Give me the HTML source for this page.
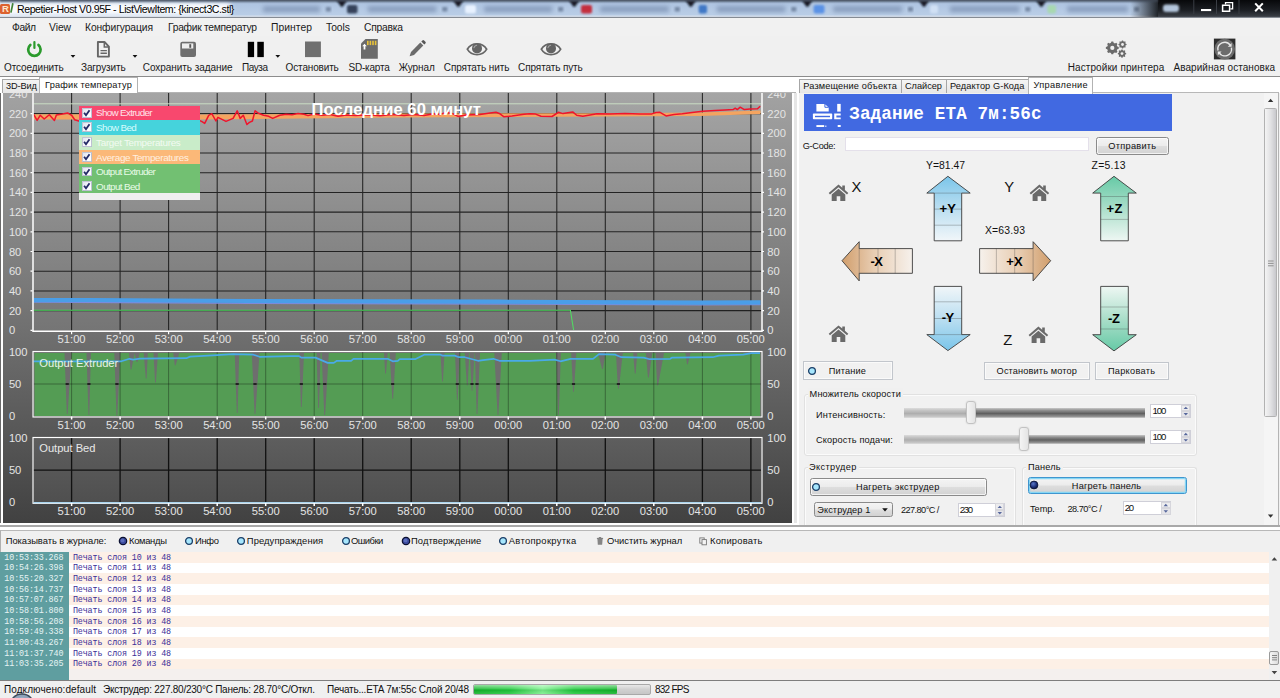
<!DOCTYPE html><html lang="ru"><head><meta charset="utf-8"><title>Repetier-Host V0.95F - ListViewItem: {kinect3C.stl}</title><style>
html,body{margin:0;padding:0;}
body{width:1280px;height:698px;overflow:hidden;background:#f0f0f0;font-family:"Liberation Sans",sans-serif;position:relative;}
.t{position:absolute;white-space:pre;display:block;}
.b{position:absolute;box-sizing:border-box;}
svg{position:absolute;overflow:visible;}
</style></head><body>
<svg style="left:0;top:0" width="1280" height="18"><defs><filter id="b1" x="-20%" y="-50%" width="140%" height="200%"><feGaussianBlur stdDeviation="1.2"/></filter><filter id="b2" x="-20%" y="-80%" width="140%" height="260%"><feGaussianBlur stdDeviation="2.2"/></filter><filter id="b3" x="-20%" y="-80%" width="140%" height="260%"><feGaussianBlur stdDeviation="0.9"/></filter><linearGradient id="tb" x1="0" y1="0" x2="0" y2="1"><stop offset="0" stop-color="#5d6c82"/><stop offset="0.1" stop-color="#9fb5d2"/><stop offset="0.2" stop-color="#aec4e1"/><stop offset="0.85" stop-color="#b9cde6"/><stop offset="0.95" stop-color="#d6e0ee"/><stop offset="1" stop-color="#d6e0ee"/></linearGradient><linearGradient id="dk" x1="0" y1="0" x2="0" y2="1"><stop offset="0" stop-color="#07080a"/><stop offset="0.6" stop-color="#1c1f24"/><stop offset="1" stop-color="#3c4148"/></linearGradient><linearGradient id="dkl" x1="0" y1="0" x2="1" y2="0"><stop offset="0" stop-color="#15181c" stop-opacity="0"/><stop offset="1" stop-color="#15181c" stop-opacity="1"/></linearGradient></defs><rect x="0" y="0" width="1280" height="17.2" fill="url(#tb)"/><rect x="263" y="6.2" width="56.89999999999998" height="6" fill="#7c91b2" opacity="0.75" filter="url(#b2)"/><rect x="325.9" y="7" width="5" height="4.5" fill="#5d6f8c" opacity="0.7" filter="url(#b1)"/><rect x="367.9" y="6.2" width="68.40000000000003" height="6" fill="#7c91b2" opacity="0.75" filter="url(#b2)"/><rect x="442.3" y="7" width="5" height="4.5" fill="#5d6f8c" opacity="0.7" filter="url(#b1)"/><rect x="484.3" y="6.2" width="67.90000000000003" height="6" fill="#7c91b2" opacity="0.75" filter="url(#b2)"/><rect x="558.2" y="7" width="5" height="4.5" fill="#5d6f8c" opacity="0.7" filter="url(#b1)"/><rect x="600.2" y="6.2" width="68.59999999999991" height="6" fill="#7c91b2" opacity="0.75" filter="url(#b2)"/><rect x="674.8" y="7" width="5" height="4.5" fill="#5d6f8c" opacity="0.7" filter="url(#b1)"/><rect x="716.8" y="6.2" width="68.5" height="6" fill="#7c91b2" opacity="0.75" filter="url(#b2)"/><rect x="791.3" y="7" width="5" height="4.5" fill="#5d6f8c" opacity="0.7" filter="url(#b1)"/><rect x="833.3" y="6.2" width="68.70000000000005" height="6" fill="#7c91b2" opacity="0.75" filter="url(#b2)"/><rect x="908" y="7" width="5" height="4.5" fill="#5d6f8c" opacity="0.7" filter="url(#b1)"/><rect x="950" y="6.2" width="69.29999999999995" height="6" fill="#7c91b2" opacity="0.75" filter="url(#b2)"/><rect x="1025.3" y="7" width="5" height="4.5" fill="#5d6f8c" opacity="0.7" filter="url(#b1)"/><rect x="1067.3" y="6.2" width="60.700000000000045" height="6" fill="#7c91b2" opacity="0.75" filter="url(#b2)"/><rect x="1134" y="7" width="5" height="4.5" fill="#5d6f8c" opacity="0.7" filter="url(#b1)"/><path d="M336.4 0 H347.4 L342.7 6.8 H341.09999999999997 Z" fill="#121824" filter="url(#b3)"/><path d="M452.8 0 H463.8 L459.1 6.8 H457.5 Z" fill="#121824" filter="url(#b3)"/><path d="M568.7 0 H579.7 L575.0 6.8 H573.4000000000001 Z" fill="#121824" filter="url(#b3)"/><path d="M685.3 0 H696.3 L691.5999999999999 6.8 H690.0 Z" fill="#121824" filter="url(#b3)"/><path d="M801.8 0 H812.8 L808.0999999999999 6.8 H806.5 Z" fill="#121824" filter="url(#b3)"/><path d="M918.5 0 H929.5 L924.8 6.8 H923.2 Z" fill="#121824" filter="url(#b3)"/><path d="M1035.8 0 H1046.8 L1042.1 6.8 H1040.5 Z" fill="#121824" filter="url(#b3)"/><rect x="347" y="5" width="10.5" height="8.5" rx="2" fill="#34425a" filter="url(#b1)"/><rect x="465" y="5" width="11" height="8.5" rx="2" fill="#e8f2ff" filter="url(#b1)"/><rect x="581" y="5" width="11" height="8.5" rx="2" fill="#c42f3c" filter="url(#b1)"/><rect x="698.7" y="5" width="8.299999999999955" height="8.5" rx="2" fill="#3f78c6" filter="url(#b1)"/><rect x="813.6" y="5" width="10.899999999999977" height="8.5" rx="2" fill="#5a92e6" filter="url(#b1)"/><rect x="930" y="5" width="8" height="8.5" rx="2" fill="#d0e0f4" filter="url(#b1)"/><rect x="1047.5" y="5" width="8.5" height="8.5" rx="2" fill="#a8d8b0" filter="url(#b1)"/><rect x="1130" y="0" width="30" height="17" fill="url(#dkl)"/><rect x="1158" y="0" width="122" height="17" fill="url(#dk)"/><rect x="1163" y="4.5" width="16" height="7.5" rx="3" fill="#b4c6dc" filter="url(#b1)"/><path d="M1193.8 0 V14 M1216.5 0 V14 M1239 0 V14" stroke="#3a3e45" stroke-width="1"/><rect x="-6" y="2.5" width="238" height="13" rx="6" fill="#fff" opacity="0.93" filter="url(#b2)"/><rect x="0" y="-1.5" width="1158" height="3.2" fill="#454d5a" opacity="0.85" filter="url(#b3)"/><rect x="0" y="16.9" width="1280" height="1.1" fill="#858b93"/><rect x="1201" y="9" width="10.2" height="2.1" fill="#fff"/><path d="M1222.6 5.2 h7 v6 h-7 z" fill="none" stroke="#fff" stroke-width="1.5"/><path d="M1225.5 4.4 V2.6 H1232.6 V8.8 H1230.4" fill="none" stroke="#fff" stroke-width="1.3"/><path d="M1255.2 3.4 L1262.8 11.2 M1262.8 3.4 L1255.2 11.2" stroke="#fff" stroke-width="2"/></svg><div class="b" style="left:0.2px;top:3.8px;width:10.0px;height:10.600000000000001px;background:#dc6230;border-radius:1.5px;"></div><span class="t" style="left:1.90px;top:3.40px;font-size:9.6px;line-height:12px;letter-spacing:0.000px;color:#ffe6cc;font-weight:bold;">R</span><svg style="left:10px;top:2px" width="5" height="13"><path d="M2.9 1.2 L0.9 10.6" stroke="#3f8236" stroke-width="1.7"/></svg><span class="t" style="left:17.00px;top:2.30px;font-size:10.6px;line-height:14px;letter-spacing:-0.442px;color:#000;">Repetier-Host V0.95F - ListViewItem: {kinect3C.stl}</span>
<div class="b" style="left:0px;top:18px;width:1280px;height:18px;background:#f1f1f1;"></div><span class="t" style="left:12.00px;top:21.10px;font-size:10.3px;line-height:13px;letter-spacing:-0.440px;color:#1a1a1a;">Файл</span><span class="t" style="left:49.00px;top:21.10px;font-size:10.3px;line-height:13px;letter-spacing:-0.046px;color:#1a1a1a;">View</span><span class="t" style="left:85.00px;top:21.10px;font-size:10.3px;line-height:13px;letter-spacing:-0.101px;color:#1a1a1a;">Конфигурация</span><span class="t" style="left:168.00px;top:21.10px;font-size:10.3px;line-height:13px;letter-spacing:-0.287px;color:#1a1a1a;">График температур</span><span class="t" style="left:271.00px;top:21.10px;font-size:10.3px;line-height:13px;letter-spacing:0.062px;color:#1a1a1a;">Принтер</span><span class="t" style="left:326.00px;top:21.10px;font-size:10.3px;line-height:13px;letter-spacing:-0.011px;color:#1a1a1a;">Tools</span><span class="t" style="left:364.00px;top:21.10px;font-size:10.3px;line-height:13px;letter-spacing:-0.234px;color:#1a1a1a;">Справка</span>
<div class="b" style="left:0px;top:36px;width:1280px;height:40px;background:#f0f0f0;"></div><div class="b" style="left:0px;top:76px;width:1280px;height:1px;background:#8c8c8c;"></div><span class="t" style="left:4.00px;top:60.80px;font-size:10px;line-height:13px;letter-spacing:-0.079px;color:#1a1a1a;">Отсоединить</span><span class="t" style="left:81.00px;top:60.80px;font-size:10px;line-height:13px;letter-spacing:-0.133px;color:#1a1a1a;">Загрузить</span><span class="t" style="left:142.80px;top:60.80px;font-size:10px;line-height:13px;letter-spacing:-0.062px;color:#1a1a1a;">Сохранить задание</span><span class="t" style="left:241.90px;top:60.80px;font-size:10px;line-height:13px;letter-spacing:-0.397px;color:#1a1a1a;">Пауза</span><span class="t" style="left:285.60px;top:60.80px;font-size:10px;line-height:13px;letter-spacing:-0.154px;color:#1a1a1a;">Остановить</span><span class="t" style="left:348.50px;top:60.80px;font-size:10px;line-height:13px;letter-spacing:-0.208px;color:#1a1a1a;">SD-карта</span><span class="t" style="left:398.80px;top:60.80px;font-size:10px;line-height:13px;letter-spacing:-0.099px;color:#1a1a1a;">Журнал</span><span class="t" style="left:443.80px;top:60.80px;font-size:10px;line-height:13px;letter-spacing:-0.099px;color:#1a1a1a;">Спрятать нить</span><span class="t" style="left:518.10px;top:60.80px;font-size:10px;line-height:13px;letter-spacing:-0.116px;color:#1a1a1a;">Спрятать путь</span><span class="t" style="left:1067.70px;top:60.80px;font-size:10px;line-height:13px;letter-spacing:0.091px;color:#1a1a1a;">Настройки принтера</span><span class="t" style="left:1173.40px;top:60.80px;font-size:10px;line-height:13px;letter-spacing:0.067px;color:#1a1a1a;">Аварийная остановка</span><svg style="left:0;top:0" width="1280" height="80"><path d="M30.3 45 A6.2 6.2 0 1 0 38.5 45" fill="none" stroke="#2a9a2c" stroke-width="2.7" stroke-linecap="round"/><path d="M34.4 42 V48" stroke="#2a9a2c" stroke-width="2.2" stroke-linecap="round"/><path d="M70.6 55 h4.8 l-2.4 2.8 z" fill="#111"/><path d="M132.6 55 h4.8 l-2.4 2.8 z" fill="#111"/><path d="M275.40000000000003 55 h4.8 l-2.4 2.8 z" fill="#111"/><path d="M97.9 42 h6.6 l4.4 4.6 v10 h-11 z" fill="#f0f0f0" stroke="#666" stroke-width="1.9" stroke-linejoin="round"/><path d="M104.3 42 v5 h4.6" fill="none" stroke="#666" stroke-width="1.5"/><path d="M100.5 50.6 h6.4 M100.5 53.3 h6.4" stroke="#666" stroke-width="1.4"/><rect x="180.3" y="41.8" width="15.7" height="15.3" rx="2" fill="#6e6e6e"/><rect x="182" y="43.4" width="11.3" height="5.1" fill="#eee"/><rect x="189.3" y="44.2" width="1.9" height="3.6" fill="#555"/><rect x="247.8" y="41.8" width="6.3" height="15.3" fill="#000"/><rect x="257.3" y="41.8" width="6.5" height="15.3" fill="#000"/><rect x="305" y="41.5" width="15.9" height="15.6" fill="#6f6f6f"/><path d="M365.5 39 H377.8 V58.8 H361 V43.5 Z" fill="#6b6b6b"/><rect x="367.0" y="40.8" width="1.6" height="4.3" fill="#e8c23a"/><rect x="369.6" y="40.8" width="1.6" height="4.3" fill="#e8c23a"/><rect x="372.2" y="40.8" width="1.6" height="4.3" fill="#e8c23a"/><rect x="374.8" y="40.8" width="1.6" height="4.3" fill="#e8c23a"/><path d="M363.6 49.5 v-3.2 h-1.4 l2.3 -2.6 l2.3 2.6 h-1.4 v3.2 z" fill="#fff"/><path d="M409.6 56.3 l1.4 -4.4 l9.3 -9.3 l3 3 l-9.3 9.3 z" fill="#6b6b6b"/><path d="M421.3 41.6 l1.1 -1.1 a1.2 1.2 0 0 1 1.7 0 l1.3 1.3 a1.2 1.2 0 0 1 0 1.7 l-1.1 1.1 z" fill="#555"/><path d="M467.3 49.2 C471.5 42 482.5 42 486.7 49.2 C482.5 56.6 471.5 56.6 467.3 49.2 Z" fill="#f0f0f0" stroke="#666" stroke-width="1.7"/><circle cx="477" cy="48.4" r="5" fill="#636363"/><path d="M474 47.6 A3.2 3.2 0 0 1 476.6 45.2" fill="none" stroke="#a8a8a8" stroke-width="1.1" stroke-linecap="round"/><path d="M541.3 49.2 C545.5 42 556.5 42 560.7 49.2 C556.5 56.6 545.5 56.6 541.3 49.2 Z" fill="#f0f0f0" stroke="#666" stroke-width="1.7"/><circle cx="551" cy="48.4" r="5" fill="#636363"/><path d="M548 47.6 A3.2 3.2 0 0 1 550.6 45.2" fill="none" stroke="#a8a8a8" stroke-width="1.1" stroke-linecap="round"/><path d="M1118.74 47.01 L1118.74 48.79 L1117.33 49.21 L1116.79 50.53 L1117.48 51.82 L1116.22 53.08 L1114.93 52.39 L1113.61 52.93 L1113.19 54.34 L1111.41 54.34 L1110.99 52.93 L1109.67 52.39 L1108.38 53.08 L1107.12 51.82 L1107.81 50.53 L1107.27 49.21 L1105.86 48.79 L1105.86 47.01 L1107.27 46.59 L1107.81 45.27 L1107.12 43.98 L1108.38 42.72 L1109.67 43.41 L1110.99 42.87 L1111.41 41.46 L1113.19 41.46 L1113.61 42.87 L1114.93 43.41 L1116.22 42.72 L1117.48 43.98 L1116.79 45.27 L1117.33 46.59 Z" fill="#6b6b6b"/><circle cx="1112.3" cy="47.9" r="2.1" fill="#f0f0f0"/><path d="M1126.56 43.94 L1126.56 45.06 L1125.67 45.33 L1125.33 46.16 L1125.77 46.97 L1124.97 47.77 L1124.16 47.33 L1123.33 47.67 L1123.06 48.56 L1121.94 48.56 L1121.67 47.67 L1120.84 47.33 L1120.03 47.77 L1119.23 46.97 L1119.67 46.16 L1119.33 45.33 L1118.44 45.06 L1118.44 43.94 L1119.33 43.67 L1119.67 42.84 L1119.23 42.03 L1120.03 41.23 L1120.84 41.67 L1121.67 41.33 L1121.94 40.44 L1123.06 40.44 L1123.33 41.33 L1124.16 41.67 L1124.97 41.23 L1125.77 42.03 L1125.33 42.84 L1125.67 43.67 Z" fill="#6b6b6b"/><circle cx="1122.5" cy="44.5" r="1.4" fill="#f0f0f0"/><path d="M1126.16 53.02 L1126.16 54.18 L1125.25 54.45 L1124.90 55.30 L1125.35 56.13 L1124.53 56.95 L1123.70 56.50 L1122.85 56.85 L1122.58 57.76 L1121.42 57.76 L1121.15 56.85 L1120.30 56.50 L1119.47 56.95 L1118.65 56.13 L1119.10 55.30 L1118.75 54.45 L1117.84 54.18 L1117.84 53.02 L1118.75 52.75 L1119.10 51.90 L1118.65 51.07 L1119.47 50.25 L1120.30 50.70 L1121.15 50.35 L1121.42 49.44 L1122.58 49.44 L1122.85 50.35 L1123.70 50.70 L1124.53 50.25 L1125.35 51.07 L1124.90 51.90 L1125.25 52.75 Z" fill="#6b6b6b"/><circle cx="1122" cy="53.6" r="1.4" fill="#f0f0f0"/><rect x="1213.9" y="38.6" width="21.5" height="20.8" fill="#2d2d2d"/><circle cx="1224.7" cy="49.1" r="10.3" fill="#6c6c6c"/><path d="M1218 50.5 A6.8 6.8 0 0 1 1230.2 45.2" fill="none" stroke="#e8e8e8" stroke-width="1.4"/><path d="M1231.4 47.6 A6.8 6.8 0 0 1 1219.2 53" fill="none" stroke="#e8e8e8" stroke-width="1.4"/><path d="M1231.6 43 v3.8 h-3.8 z M1217.8 55.2 v-3.8 h3.8 z" fill="#e8e8e8"/></svg>
<div class="b" style="left:0px;top:77px;width:796px;height:16px;background:#fff;"></div><div class="b" style="left:2px;top:79px;width:38px;height:14px;background:linear-gradient(#f4f4f4,#e6e6e6);border:1px solid #a6a6a6;border-bottom:none;"></div><div class="b" style="left:39.4px;top:77.2px;width:98.6px;height:16.799999999999997px;background:#fff;border:1px solid #b2b2b2;border-bottom:none;"></div><div class="b" style="left:138px;top:92px;width:658px;height:1px;background:#b4b4b4;"></div><span class="t" style="left:6.00px;top:79.80px;font-size:9.2px;line-height:12px;letter-spacing:-0.113px;color:#111;">3D-Вид</span><span class="t" style="left:45.00px;top:78.60px;font-size:9.2px;line-height:12px;letter-spacing:0.207px;color:#111;">График температур</span>
<svg style="left:0;top:0" width="796" height="524"><defs><linearGradient id="pg" x1="0" y1="0" x2="0" y2="1"><stop offset="0" stop-color="#a2a2a2"/><stop offset="0.55" stop-color="#707070"/><stop offset="1" stop-color="#414141"/></linearGradient></defs><rect x="0" y="93" width="796" height="431" fill="url(#pg)"/><rect x="33.5" y="93" width="727.5" height="237.3" fill="rgba(255,255,255,0.04)"/><path d="M33.5 310.6 H761.0 M33.5 290.9 H761.0 M33.5 271.2 H761.0 M33.5 251.5 H761.0 M33.5 231.8 H761.0 M33.5 212.1 H761.0 M33.5 192.4 H761.0 M33.5 172.7 H761.0 M33.5 153.0 H761.0 M33.5 133.3 H761.0 M33.5 113.6 H761.0 M71.6 93 V330.3 M120.1 93 V330.3 M168.6 93 V330.3 M217.2 93 V330.3 M265.7 93 V330.3 M314.2 93 V330.3 M362.7 93 V330.3 M411.2 93 V330.3 M459.8 93 V330.3 M508.3 93 V330.3 M556.8 93 V330.3 M605.3 93 V330.3 M653.8 93 V330.3 M702.4 93 V330.3 M750.9 93 V330.3" stroke="#1a1a1a" stroke-width="1.05" fill="none" opacity="0.92"/><path d="M33.5 103.8 H761.0" stroke="#c9dcc4" stroke-width="1"/><path d="M33.5 114.3 L200 114.6 L400 113.4 L600 113.2 L700 112.4 L760.5 110.6 L760.5 113.9 L700 116 L600 116.6 L400 117.6 L300 118.6 L200 119.6 L33.5 119.6 Z" fill="#f4a460"/><polyline points="33.7,114.3 37.1,120.4 40.2,115.3 44.2,119 49.3,114.7 54.4,120.4 56.4,114.9 62.5,113.9 67.6,112.9 71.6,115.3 74.7,119.8 78.7,121 90,118 100,121 110,117 130,120 150,116 170,119 190,117 201.6,121.4 204.7,123.4 208.7,115.3 211.8,113.7 215.9,121 217.9,117.3 222,119.4 226,121.4 233.1,118.4 237.2,110.8 240.2,118.4 243.3,115.3 246.9,124.5 249.4,122.4 252.4,121 255.1,110.8 258.5,113.3 263.6,115.3 268.7,116.3 272.7,118.4 279.8,115.3 286,114.3 292,114.8 298,113.6 304,114.2 308,115.6 314,114 322,115.2 330,114.4 338,116.2 346,115 356,115.6 368,114.8 380,115.8 392,114.6 404,115.6 414,114.4 424,115.4 434,113.8 440,114.6 446,112.2 452,113.4 458,116.4 466,115 480,114.6 490,113 496,112.2 500,113.8 504,116.8 512,116 524,114.2 530,113.7 535,113.9 541,116.3 552,116.5 558.4,112.3 563,113.6 572.7,111.9 576.7,115.3 582.8,116.3 590,115 597,113.7 610,113.9 625,113.4 640,113.9 651.9,113.9 656,112.5 660,112.3 666.1,115.9 674,114.6 682.3,113.7 692,112.4 702.7,111.3 715,110.6 725,110 733.1,109.6 735.2,108.2 737.3,109.6 740.2,107.2 744.3,109.6 750,109 757.5,108.8 760.2,106.2" fill="none" stroke="#f0142c" stroke-width="1.5" stroke-linejoin="round"/><path d="M33.5 302 L250 303.2 L500 304 L700 304.9 L760.5 304.6" stroke="#7e8ada" stroke-width="1.4" fill="none"/><path d="M33.5 300.1 L90 300 L250 301 L500 301.7 L700 302.6 L760.5 302.4" stroke="#4a9ee8" stroke-width="4.2" fill="none"/><path d="M33.5 310.3 H570.4 L573.6 330" stroke="#52d862" stroke-width="1.1" fill="none"/><path d="M33.0 93 V331.3 H762.0 V93" stroke="#fff" stroke-width="1.5" fill="none"/><path d="M30.5 330.3 h2 M762.0 330.3 h2 M30.5 310.6 h2 M762.0 310.6 h2 M30.5 290.9 h2 M762.0 290.9 h2 M30.5 271.2 h2 M762.0 271.2 h2 M30.5 251.5 h2 M762.0 251.5 h2 M30.5 231.8 h2 M762.0 231.8 h2 M30.5 212.1 h2 M762.0 212.1 h2 M30.5 192.4 h2 M762.0 192.4 h2 M30.5 172.7 h2 M762.0 172.7 h2 M30.5 153.0 h2 M762.0 153.0 h2 M30.5 133.3 h2 M762.0 133.3 h2 M30.5 113.6 h2 M762.0 113.6 h2 M71.6 331 v3.2 M120.1 331 v3.2 M168.6 331 v3.2 M217.2 331 v3.2 M265.7 331 v3.2 M314.2 331 v3.2 M362.7 331 v3.2 M411.2 331 v3.2 M459.8 331 v3.2 M508.3 331 v3.2 M556.8 331 v3.2 M605.3 331 v3.2 M653.8 331 v3.2 M702.4 331 v3.2 M750.9 331 v3.2" stroke="#fff" stroke-width="1.2"/></svg><span class="t" style="left:8.90px;top:323.30px;font-size:11.2px;line-height:15px;letter-spacing:0.000px;color:#e4e4e4;">0</span><span class="t" style="left:767.30px;top:323.30px;font-size:11.2px;line-height:15px;letter-spacing:0.000px;color:#e4e4e4;">0</span><span class="t" style="left:8.90px;top:303.60px;font-size:11.2px;line-height:15px;letter-spacing:-0.000px;color:#e4e4e4;">20</span><span class="t" style="left:767.30px;top:303.60px;font-size:11.2px;line-height:15px;letter-spacing:0.000px;color:#e4e4e4;">20</span><span class="t" style="left:8.90px;top:283.90px;font-size:11.2px;line-height:15px;letter-spacing:-0.000px;color:#e4e4e4;">40</span><span class="t" style="left:767.30px;top:283.90px;font-size:11.2px;line-height:15px;letter-spacing:0.000px;color:#e4e4e4;">40</span><span class="t" style="left:8.90px;top:264.20px;font-size:11.2px;line-height:15px;letter-spacing:-0.000px;color:#e4e4e4;">60</span><span class="t" style="left:767.30px;top:264.20px;font-size:11.2px;line-height:15px;letter-spacing:0.000px;color:#e4e4e4;">60</span><span class="t" style="left:8.90px;top:244.50px;font-size:11.2px;line-height:15px;letter-spacing:-0.000px;color:#e4e4e4;">80</span><span class="t" style="left:767.30px;top:244.50px;font-size:11.2px;line-height:15px;letter-spacing:0.000px;color:#e4e4e4;">80</span><span class="t" style="left:8.90px;top:224.80px;font-size:11.2px;line-height:15px;letter-spacing:0.000px;color:#e4e4e4;">100</span><span class="t" style="left:767.30px;top:224.80px;font-size:11.2px;line-height:15px;letter-spacing:0.000px;color:#e4e4e4;">100</span><span class="t" style="left:8.90px;top:205.10px;font-size:11.2px;line-height:15px;letter-spacing:0.000px;color:#e4e4e4;">120</span><span class="t" style="left:767.30px;top:205.10px;font-size:11.2px;line-height:15px;letter-spacing:0.000px;color:#e4e4e4;">120</span><span class="t" style="left:8.90px;top:185.40px;font-size:11.2px;line-height:15px;letter-spacing:0.000px;color:#e4e4e4;">140</span><span class="t" style="left:767.30px;top:185.40px;font-size:11.2px;line-height:15px;letter-spacing:0.000px;color:#e4e4e4;">140</span><span class="t" style="left:8.90px;top:165.70px;font-size:11.2px;line-height:15px;letter-spacing:0.000px;color:#e4e4e4;">160</span><span class="t" style="left:767.30px;top:165.70px;font-size:11.2px;line-height:15px;letter-spacing:0.000px;color:#e4e4e4;">160</span><span class="t" style="left:8.90px;top:146.00px;font-size:11.2px;line-height:15px;letter-spacing:0.000px;color:#e4e4e4;">180</span><span class="t" style="left:767.30px;top:146.00px;font-size:11.2px;line-height:15px;letter-spacing:0.000px;color:#e4e4e4;">180</span><span class="t" style="left:8.90px;top:126.30px;font-size:11.2px;line-height:15px;letter-spacing:0.000px;color:#e4e4e4;">200</span><span class="t" style="left:767.30px;top:126.30px;font-size:11.2px;line-height:15px;letter-spacing:0.000px;color:#e4e4e4;">200</span><span class="t" style="left:8.90px;top:106.60px;font-size:11.2px;line-height:15px;letter-spacing:0.000px;color:#e4e4e4;">220</span><span class="t" style="left:767.30px;top:106.60px;font-size:11.2px;line-height:15px;letter-spacing:0.000px;color:#e4e4e4;">220</span><div class="b" style="left:0;top:93px;width:796px;height:10px;overflow:hidden"><span class="t" style="left:8.90px;top:-6.10px;font-size:11.2px;line-height:15px;letter-spacing:0.000px;color:#e4e4e4;">240</span><span class="t" style="left:767.30px;top:-6.10px;font-size:11.2px;line-height:15px;letter-spacing:0.000px;color:#e4e4e4;">240</span></div><span class="t" style="left:57.59px;top:331.70px;font-size:11.2px;line-height:15px;letter-spacing:0.000px;color:#e4e4e4;">51:00</span><span class="t" style="left:106.11px;top:331.70px;font-size:11.2px;line-height:15px;letter-spacing:0.000px;color:#e4e4e4;">52:00</span><span class="t" style="left:154.63px;top:331.70px;font-size:11.2px;line-height:15px;letter-spacing:0.000px;color:#e4e4e4;">53:00</span><span class="t" style="left:203.15px;top:331.70px;font-size:11.2px;line-height:15px;letter-spacing:0.000px;color:#e4e4e4;">54:00</span><span class="t" style="left:251.67px;top:331.70px;font-size:11.2px;line-height:15px;letter-spacing:0.000px;color:#e4e4e4;">55:00</span><span class="t" style="left:300.19px;top:331.70px;font-size:11.2px;line-height:15px;letter-spacing:0.000px;color:#e4e4e4;">56:00</span><span class="t" style="left:348.71px;top:331.70px;font-size:11.2px;line-height:15px;letter-spacing:0.000px;color:#e4e4e4;">57:00</span><span class="t" style="left:397.23px;top:331.70px;font-size:11.2px;line-height:15px;letter-spacing:0.000px;color:#e4e4e4;">58:00</span><span class="t" style="left:445.75px;top:331.70px;font-size:11.2px;line-height:15px;letter-spacing:0.000px;color:#e4e4e4;">59:00</span><span class="t" style="left:494.27px;top:331.70px;font-size:11.2px;line-height:15px;letter-spacing:0.000px;color:#e4e4e4;">00:00</span><span class="t" style="left:542.79px;top:331.70px;font-size:11.2px;line-height:15px;letter-spacing:0.000px;color:#e4e4e4;">01:00</span><span class="t" style="left:591.31px;top:331.70px;font-size:11.2px;line-height:15px;letter-spacing:0.000px;color:#e4e4e4;">02:00</span><span class="t" style="left:639.83px;top:331.70px;font-size:11.2px;line-height:15px;letter-spacing:0.000px;color:#e4e4e4;">03:00</span><span class="t" style="left:688.35px;top:331.70px;font-size:11.2px;line-height:15px;letter-spacing:0.000px;color:#e4e4e4;">04:00</span><span class="t" style="left:736.77px;top:331.70px;font-size:11.2px;line-height:15px;letter-spacing:0.000px;color:#e4e4e4;">05:00</span><span class="t" style="left:311.50px;top:98.60px;font-size:16.6px;line-height:22px;letter-spacing:0.064px;color:#fff;font-weight:bold;">Последние 60 минут</span>
<div class="b" style="left:79.1px;top:105.8px;width:121.4px;height:14.200000000000003px;background:#f8486e;"></div><div class="b" style="left:82px;top:108.3px;width:9.599999999999994px;height:9.600000000000009px;background:linear-gradient(135deg,#dfe3ee,#fdfdff 70%);border:1px solid rgba(150,155,180,.55);"></div><svg style="left:82px;top:108.3px" width="9.6" height="9.6"><path d="M2.1 4.7 L4 7.2 L7.5 2.2" fill="none" stroke="#232a66" stroke-width="1.8"/></svg><span class="t" style="left:96.10px;top:106.10px;font-size:9.9px;line-height:13px;letter-spacing:-0.694px;color:#ffe4ea;">Show Extruder</span><div class="b" style="left:79.1px;top:119.8px;width:121.4px;height:14.999999999999986px;background:#45d3dc;"></div><div class="b" style="left:82px;top:122.4px;width:9.599999999999994px;height:9.599999999999994px;background:linear-gradient(135deg,#dfe3ee,#fdfdff 70%);border:1px solid rgba(150,155,180,.55);"></div><svg style="left:82px;top:122.4px" width="9.6" height="9.6"><path d="M2.1 4.7 L4 7.2 L7.5 2.2" fill="none" stroke="#232a66" stroke-width="1.8"/></svg><span class="t" style="left:96.10px;top:121.00px;font-size:9.9px;line-height:13px;letter-spacing:-0.618px;color:#d8fcfc;">Show Bed</span><div class="b" style="left:79.1px;top:134.6px;width:121.4px;height:15.199999999999989px;background:#c9ecc9;"></div><div class="b" style="left:82px;top:137.3px;width:9.599999999999994px;height:9.599999999999994px;background:linear-gradient(135deg,#dfe3ee,#fdfdff 70%);border:1px solid rgba(150,155,180,.55);"></div><svg style="left:82px;top:137.3px" width="9.6" height="9.6"><path d="M2.1 4.7 L4 7.2 L7.5 2.2" fill="none" stroke="#232a66" stroke-width="1.8"/></svg><span class="t" style="left:96.10px;top:135.90px;font-size:9.9px;line-height:13px;letter-spacing:-0.317px;color:#f2fbf2;">Target Temperatures</span><div class="b" style="left:79.1px;top:149.6px;width:121.4px;height:14.5px;background:#fbb878;"></div><div class="b" style="left:82px;top:151.9px;width:9.599999999999994px;height:9.699999999999989px;background:linear-gradient(135deg,#dfe3ee,#fdfdff 70%);border:1px solid rgba(150,155,180,.55);"></div><svg style="left:82px;top:151.9px" width="9.6" height="9.6"><path d="M2.1 4.7 L4 7.2 L7.5 2.2" fill="none" stroke="#232a66" stroke-width="1.8"/></svg><span class="t" style="left:96.10px;top:150.55px;font-size:9.9px;line-height:13px;letter-spacing:-0.357px;color:#fff0e0;">Average Temperatures</span><div class="b" style="left:79.1px;top:163.9px;width:121.4px;height:15.199999999999989px;background:#72c072;"></div><div class="b" style="left:82px;top:166.6px;width:9.599999999999994px;height:9.599999999999994px;background:linear-gradient(135deg,#dfe3ee,#fdfdff 70%);border:1px solid rgba(150,155,180,.55);"></div><svg style="left:82px;top:166.6px" width="9.6" height="9.6"><path d="M2.1 4.7 L4 7.2 L7.5 2.2" fill="none" stroke="#232a66" stroke-width="1.8"/></svg><span class="t" style="left:96.10px;top:165.20px;font-size:9.9px;line-height:13px;letter-spacing:-0.713px;color:#e8fbe8;">Output Extruder</span><div class="b" style="left:79.1px;top:178.9px;width:121.4px;height:14.499999999999972px;background:#72c072;"></div><div class="b" style="left:82px;top:181.2px;width:9.599999999999994px;height:9.700000000000017px;background:linear-gradient(135deg,#dfe3ee,#fdfdff 70%);border:1px solid rgba(150,155,180,.55);"></div><svg style="left:82px;top:181.2px" width="9.6" height="9.6"><path d="M2.1 4.7 L4 7.2 L7.5 2.2" fill="none" stroke="#232a66" stroke-width="1.8"/></svg><span class="t" style="left:96.10px;top:179.85px;font-size:9.9px;line-height:13px;letter-spacing:-0.642px;color:#e8fbe8;">Output Bed</span><div class="b" style="left:79.1px;top:193.2px;width:121.4px;height:7.300000000000011px;background:#efefef;"></div>
<svg style="left:0;top:0" width="796" height="524"><rect x="33.5" y="352.0" width="727.5" height="64.0" fill="#6e6e6e"/><polygon points="34.5,416.0 34.5,353.0 64.5,353.0 66.8,414.0 67.6,414.0 71.6,353.0 86.5,353.0 88.5,415.0 89.3,415.0 90.9,353.0 114.3,353.0 116.5,415.7 117.3,415.7 120.4,353.0 128.9,353.0 130.6,369.4 131.4,369.4 134.6,353.0 134.6,353.0 136.6,362.0 137.4,362.0 139.7,353.0 143.7,353.0 145.8,378.5 146.6,378.5 147.8,353.0 153.5,353.0 155.1,382.6 155.9,382.6 158.0,353.0 173.2,353.0 174.8,365.3 175.6,365.3 179.3,353.0 234.7,353.0 236.8,413.0 237.6,413.0 239.2,353.0 251.8,353.0 254.6,414.0 255.4,414.0 259.5,353.0 299.3,353.0 300.9,407.0 301.7,407.0 304.0,353.0 316.6,353.0 318.2,408.0 319.0,408.0 320.6,353.0 321.6,353.0 324.3,415.0 325.1,415.0 328.8,353.0 384.0,353.0 385.2,373.4 386.0,373.4 387.7,353.0 389.7,353.0 392.3,398.8 393.1,398.8 395.8,353.0 440.5,353.0 442.1,381.6 442.9,381.6 444.5,353.0 455.0,353.0 456.9,399.8 457.7,399.8 459.8,353.0 464.8,353.0 466.9,385.6 467.7,385.6 469.3,353.0 469.9,353.0 471.6,390.7 472.4,390.7 474.6,353.0 475.0,353.0 476.6,414.0 477.4,414.0 480.0,353.0 494.3,353.0 497.6,415.0 498.4,415.0 501.8,353.0 556.0,353.0 558.0,415.0 558.8,415.0 560.9,353.0 571.2,353.0 573.1,391.7 573.9,391.7 576.3,353.0 598.0,353.0 602.1,369.0 602.9,369.0 605.6,353.0 615.9,353.0 618.0,388.7 618.8,388.7 622.8,353.0 633.2,353.0 634.8,373.4 635.6,373.4 637.3,353.0 645.8,353.0 648.0,377.5 648.8,377.5 652.3,353.0 655.5,353.0 657.2,385.6 658.0,385.6 664.0,353.0 685.4,353.0 687.0,364.3 687.8,364.3 690.5,353.0 760.2,353.0 760.2,416.0" fill="#549c54"/><path d="M33.5 384.0 H761.0 M71.6 352.0 V416.0 M120.1 352.0 V416.0 M168.6 352.0 V416.0 M217.2 352.0 V416.0 M265.7 352.0 V416.0 M314.2 352.0 V416.0 M362.7 352.0 V416.0 M411.2 352.0 V416.0 M459.8 352.0 V416.0 M508.3 352.0 V416.0 M556.8 352.0 V416.0 M605.3 352.0 V416.0 M653.8 352.0 V416.0 M702.4 352.0 V416.0 M750.9 352.0 V416.0" stroke="rgba(0,0,0,0.33)" stroke-width="1" fill="none"/><rect x="65.6" y="383.1" width="3.2" height="1.8" fill="#1c1c1c"/><rect x="87.3" y="383.1" width="3.2" height="1.8" fill="#1c1c1c"/><rect x="115.3" y="383.1" width="3.2" height="1.8" fill="#1c1c1c"/><rect x="235.6" y="383.1" width="3.2" height="1.8" fill="#1c1c1c"/><rect x="253.4" y="383.1" width="3.2" height="1.8" fill="#1c1c1c"/><rect x="299.7" y="383.1" width="3.2" height="1.8" fill="#1c1c1c"/><rect x="317.0" y="383.1" width="3.2" height="1.8" fill="#1c1c1c"/><rect x="323.1" y="383.1" width="3.2" height="1.8" fill="#1c1c1c"/><rect x="391.1" y="383.1" width="3.2" height="1.8" fill="#1c1c1c"/><rect x="455.7" y="383.1" width="3.2" height="1.8" fill="#1c1c1c"/><rect x="470.4" y="383.1" width="3.2" height="1.8" fill="#1c1c1c"/><rect x="475.4" y="383.1" width="3.2" height="1.8" fill="#1c1c1c"/><rect x="496.4" y="383.1" width="3.2" height="1.8" fill="#1c1c1c"/><rect x="556.8" y="383.1" width="3.2" height="1.8" fill="#1c1c1c"/><rect x="571.9" y="383.1" width="3.2" height="1.8" fill="#1c1c1c"/><rect x="616.8" y="383.1" width="3.2" height="1.8" fill="#1c1c1c"/><polyline points="33.5,361.3 121.4,361.3 129.5,358.8 133,359.6 140,358.6 186.4,358.2 190,356.6 216.9,355.2 233.1,354.1 253.4,354.7 259.5,356.8 290,356.2 299.3,356.2 301.3,357.6 315.5,357.6 327.7,362.9 333.8,362.9 336.9,360.8 351.1,360.8 353.5,358.8 387.7,358.8 392.7,361.3 397.8,360.8 399.8,359.2 415.1,359.2 424.2,354.7 440.5,354.7 442.5,355.6 454.7,355.6 458.8,357.2 464.8,357.2 478,360.8 483.1,360.2 493.3,358.8 499.4,360.8 530,360.8 554.4,359.6 560.5,361.3 570.6,358.8 593,358.8 599,354.1 615.3,354.7 621.4,357.2 643.7,357.6 649.8,359.2 670.2,358.8 672.2,357.6 712.8,357.2 718.9,355.6 743.3,354.7 751.4,353.1 760,353.1" fill="none" stroke="#49aae8" stroke-width="1.7" stroke-linejoin="round"/><rect x="33.0" y="351.5" width="729.0" height="65.5" fill="none" stroke="#fff" stroke-width="1.15"/><rect x="33.5" y="438.0" width="727.5" height="64.30000000000001" fill="rgba(255,255,255,0.05)"/><path d="M33.5 470.15 H761.0 M71.6 438.0 V502.3 M120.1 438.0 V502.3 M168.6 438.0 V502.3 M217.2 438.0 V502.3 M265.7 438.0 V502.3 M314.2 438.0 V502.3 M362.7 438.0 V502.3 M411.2 438.0 V502.3 M459.8 438.0 V502.3 M508.3 438.0 V502.3 M556.8 438.0 V502.3 M605.3 438.0 V502.3 M653.8 438.0 V502.3 M702.4 438.0 V502.3 M750.9 438.0 V502.3" stroke="#111" stroke-width="1.3" fill="none"/><rect x="33.0" y="437.5" width="729.0" height="65.80000000000001" fill="none" stroke="#fff" stroke-width="1.15"/><path d="M33.5 502.7 H761.0" stroke="#a9d4ee" stroke-width="1.2"/><path d="M71.6 416.6 v3 M120.1 416.6 v3 M168.6 416.6 v3 M217.2 416.6 v3 M265.7 416.6 v3 M314.2 416.6 v3 M362.7 416.6 v3 M411.2 416.6 v3 M459.8 416.6 v3 M508.3 416.6 v3 M556.8 416.6 v3 M605.3 416.6 v3 M653.8 416.6 v3 M702.4 416.6 v3 M750.9 416.6 v3 M71.6 502.90000000000003 v3 M120.1 502.90000000000003 v3 M168.6 502.90000000000003 v3 M217.2 502.90000000000003 v3 M265.7 502.90000000000003 v3 M314.2 502.90000000000003 v3 M362.7 502.90000000000003 v3 M411.2 502.90000000000003 v3 M459.8 502.90000000000003 v3 M508.3 502.90000000000003 v3 M556.8 502.90000000000003 v3 M605.3 502.90000000000003 v3 M653.8 502.90000000000003 v3 M702.4 502.90000000000003 v3 M750.9 502.90000000000003 v3" stroke="#fff" stroke-width="1.5"/></svg><span class="t" style="left:8.90px;top:344.90px;font-size:11.2px;line-height:15px;letter-spacing:0.000px;color:#e4e4e4;">100</span><span class="t" style="left:767.30px;top:344.90px;font-size:11.2px;line-height:15px;letter-spacing:0.000px;color:#e4e4e4;">100</span><span class="t" style="left:8.90px;top:376.90px;font-size:11.2px;line-height:15px;letter-spacing:-0.000px;color:#e4e4e4;">50</span><span class="t" style="left:767.30px;top:376.90px;font-size:11.2px;line-height:15px;letter-spacing:0.000px;color:#e4e4e4;">50</span><span class="t" style="left:8.90px;top:408.90px;font-size:11.2px;line-height:15px;letter-spacing:0.000px;color:#e4e4e4;">0</span><span class="t" style="left:767.30px;top:408.90px;font-size:11.2px;line-height:15px;letter-spacing:0.000px;color:#e4e4e4;">0</span><span class="t" style="left:8.90px;top:430.90px;font-size:11.2px;line-height:15px;letter-spacing:0.000px;color:#e4e4e4;">100</span><span class="t" style="left:767.30px;top:430.90px;font-size:11.2px;line-height:15px;letter-spacing:0.000px;color:#e4e4e4;">100</span><span class="t" style="left:8.90px;top:463.05px;font-size:11.2px;line-height:15px;letter-spacing:-0.000px;color:#e4e4e4;">50</span><span class="t" style="left:767.30px;top:463.05px;font-size:11.2px;line-height:15px;letter-spacing:0.000px;color:#e4e4e4;">50</span><span class="t" style="left:8.90px;top:495.20px;font-size:11.2px;line-height:15px;letter-spacing:0.000px;color:#e4e4e4;">0</span><span class="t" style="left:767.30px;top:495.20px;font-size:11.2px;line-height:15px;letter-spacing:0.000px;color:#e4e4e4;">0</span><span class="t" style="left:57.59px;top:417.50px;font-size:11.2px;line-height:15px;letter-spacing:0.000px;color:#e4e4e4;">51:00</span><span class="t" style="left:106.11px;top:417.50px;font-size:11.2px;line-height:15px;letter-spacing:0.000px;color:#e4e4e4;">52:00</span><span class="t" style="left:154.63px;top:417.50px;font-size:11.2px;line-height:15px;letter-spacing:0.000px;color:#e4e4e4;">53:00</span><span class="t" style="left:203.15px;top:417.50px;font-size:11.2px;line-height:15px;letter-spacing:0.000px;color:#e4e4e4;">54:00</span><span class="t" style="left:251.67px;top:417.50px;font-size:11.2px;line-height:15px;letter-spacing:0.000px;color:#e4e4e4;">55:00</span><span class="t" style="left:300.19px;top:417.50px;font-size:11.2px;line-height:15px;letter-spacing:0.000px;color:#e4e4e4;">56:00</span><span class="t" style="left:348.71px;top:417.50px;font-size:11.2px;line-height:15px;letter-spacing:0.000px;color:#e4e4e4;">57:00</span><span class="t" style="left:397.23px;top:417.50px;font-size:11.2px;line-height:15px;letter-spacing:0.000px;color:#e4e4e4;">58:00</span><span class="t" style="left:445.75px;top:417.50px;font-size:11.2px;line-height:15px;letter-spacing:0.000px;color:#e4e4e4;">59:00</span><span class="t" style="left:494.27px;top:417.50px;font-size:11.2px;line-height:15px;letter-spacing:0.000px;color:#e4e4e4;">00:00</span><span class="t" style="left:542.79px;top:417.50px;font-size:11.2px;line-height:15px;letter-spacing:0.000px;color:#e4e4e4;">01:00</span><span class="t" style="left:591.31px;top:417.50px;font-size:11.2px;line-height:15px;letter-spacing:0.000px;color:#e4e4e4;">02:00</span><span class="t" style="left:639.83px;top:417.50px;font-size:11.2px;line-height:15px;letter-spacing:0.000px;color:#e4e4e4;">03:00</span><span class="t" style="left:688.35px;top:417.50px;font-size:11.2px;line-height:15px;letter-spacing:0.000px;color:#e4e4e4;">04:00</span><span class="t" style="left:736.77px;top:417.50px;font-size:11.2px;line-height:15px;letter-spacing:0.000px;color:#e4e4e4;">05:00</span><span class="t" style="left:57.59px;top:503.50px;font-size:11.2px;line-height:15px;letter-spacing:0.000px;color:#e4e4e4;">51:00</span><span class="t" style="left:106.11px;top:503.50px;font-size:11.2px;line-height:15px;letter-spacing:0.000px;color:#e4e4e4;">52:00</span><span class="t" style="left:154.63px;top:503.50px;font-size:11.2px;line-height:15px;letter-spacing:0.000px;color:#e4e4e4;">53:00</span><span class="t" style="left:203.15px;top:503.50px;font-size:11.2px;line-height:15px;letter-spacing:0.000px;color:#e4e4e4;">54:00</span><span class="t" style="left:251.67px;top:503.50px;font-size:11.2px;line-height:15px;letter-spacing:0.000px;color:#e4e4e4;">55:00</span><span class="t" style="left:300.19px;top:503.50px;font-size:11.2px;line-height:15px;letter-spacing:0.000px;color:#e4e4e4;">56:00</span><span class="t" style="left:348.71px;top:503.50px;font-size:11.2px;line-height:15px;letter-spacing:0.000px;color:#e4e4e4;">57:00</span><span class="t" style="left:397.23px;top:503.50px;font-size:11.2px;line-height:15px;letter-spacing:0.000px;color:#e4e4e4;">58:00</span><span class="t" style="left:445.75px;top:503.50px;font-size:11.2px;line-height:15px;letter-spacing:0.000px;color:#e4e4e4;">59:00</span><span class="t" style="left:494.27px;top:503.50px;font-size:11.2px;line-height:15px;letter-spacing:0.000px;color:#e4e4e4;">00:00</span><span class="t" style="left:542.79px;top:503.50px;font-size:11.2px;line-height:15px;letter-spacing:0.000px;color:#e4e4e4;">01:00</span><span class="t" style="left:591.31px;top:503.50px;font-size:11.2px;line-height:15px;letter-spacing:0.000px;color:#e4e4e4;">02:00</span><span class="t" style="left:639.83px;top:503.50px;font-size:11.2px;line-height:15px;letter-spacing:0.000px;color:#e4e4e4;">03:00</span><span class="t" style="left:688.35px;top:503.50px;font-size:11.2px;line-height:15px;letter-spacing:0.000px;color:#e4e4e4;">04:00</span><span class="t" style="left:736.77px;top:503.50px;font-size:11.2px;line-height:15px;letter-spacing:0.000px;color:#e4e4e4;">05:00</span><span class="t" style="left:39.30px;top:355.80px;font-size:11.2px;line-height:15px;letter-spacing:0.003px;color:#e8f4e8;">Output Extruder</span><span class="t" style="left:39.30px;top:441.30px;font-size:11.2px;line-height:15px;letter-spacing:-0.051px;color:#e8e8e8;">Output Bed</span><div class="b" style="left:0px;top:93px;width:1px;height:431px;background:#6a6a6a;"></div><div class="b" style="left:1px;top:93px;width:1.7999999999999998px;height:433px;background:#fff;"></div><div class="b" style="left:791.5px;top:93px;width:7.5px;height:434px;background:linear-gradient(90deg,#fff 0,#fff 1.6px,#e6e6e6 1.6px,#e6e6e6 5px,#fff 5px,#fff 7px);"></div><div class="b" style="left:0px;top:523.4px;width:799px;height:3.6000000000000227px;background:#fff;"></div>
<div class="b" style="left:796px;top:77px;width:484px;height:16px;background:#fff;"></div><div class="b" style="left:798.7px;top:92.2px;width:480.70000000000005px;height:433.2px;background:#f1f1f1;border-top:1px solid #b8b8b8;border-right:1px solid #b4b4b4;"></div><div class="b" style="left:799.2px;top:79px;width:102.79999999999995px;height:14px;background:linear-gradient(#f5f5f5,#e6e6e6);border:1px solid #a6a6a6;border-bottom:none;"></div><span class="t" style="left:803.30px;top:79.70px;font-size:9.2px;line-height:12px;letter-spacing:0.143px;color:#111;">Размещение объекта</span><div class="b" style="left:901px;top:79px;width:46px;height:14px;background:linear-gradient(#f5f5f5,#e6e6e6);border:1px solid #a6a6a6;border-bottom:none;"></div><span class="t" style="left:905.00px;top:79.70px;font-size:9.2px;line-height:12px;letter-spacing:-0.016px;color:#111;">Слайсер</span><div class="b" style="left:946px;top:79px;width:83.29999999999995px;height:14px;background:linear-gradient(#f5f5f5,#e6e6e6);border:1px solid #a6a6a6;border-bottom:none;"></div><span class="t" style="left:950.00px;top:79.70px;font-size:9.2px;line-height:12px;letter-spacing:0.098px;color:#111;">Редактор G-Кода</span><div class="b" style="left:1028.3px;top:77.2px;width:64.70000000000005px;height:17.200000000000003px;background:#fdfdfd;border:1px solid #b2b2b2;border-bottom:none;"></div><span class="t" style="left:1033.50px;top:78.60px;font-size:9.2px;line-height:12px;letter-spacing:0.341px;color:#111;">Управление</span><div class="b" style="left:803.6px;top:93.9px;width:368.4px;height:37.29999999999998px;background:#4169e1;"></div><span class="t" style="left:849.20px;top:102.70px;font-size:17.6px;line-height:23px;letter-spacing:0.136px;color:#fff;font-family:'Liberation Mono',monospace;font-weight:bold;">Задание ETA 7м:56с</span><svg style="left:0;top:0" width="1280" height="140"><path d="M816.4 103.9 h8.3 l4 3.6 v4.1 h-12.3 z" fill="#fff"/><path d="M824.9 103.9 v3.4 h3.8" fill="none" stroke="#4169e1" stroke-width="1"/><rect x="837.2" y="103.9" width="3.5" height="7.7" fill="#fff"/><rect x="812.9" y="113.6" width="19.3" height="5.7" rx="0.8" fill="#fff"/><rect x="815" y="115.8" width="15" height="1.4" fill="#4169e1"/><path d="M834.2 113.6 h6.5 v1.8 h-4.3 v2.1 h4.3 v1.8 h-6.5 z" fill="#fff"/><rect x="816.4" y="125.1" width="7.8" height="1.9" fill="#fff"/><rect x="825.2" y="125.6" width="1.2" height="1.2" fill="#fff"/><rect x="837.7" y="125" width="3" height="2" fill="#fff"/></svg><span class="t" style="left:802.80px;top:139.50px;font-size:9.2px;line-height:12px;letter-spacing:-0.327px;color:#111;">G-Code:</span><div class="b" style="left:845.4px;top:137.3px;width:244.0000000000001px;height:13.899999999999977px;background:#fff;border:1px solid #e4e0ea;"></div><div class="b" style="left:1096.1px;top:137.3px;width:73.10000000000014px;height:17.299999999999983px;background:linear-gradient(#f4f4f4 0,#ececec 48%,#dedede 52%,#d2d2d2 100%);border:1px solid #8a8a8a;border-radius:2.5px;box-shadow:inset 0 0 0 1px rgba(255,255,255,.7);"></div><span class="t" style="left:1108.30px;top:140.40px;font-size:9.2px;line-height:12px;letter-spacing:0.286px;color:#111;">Отправить</span><span class="t" style="left:926.10px;top:159.10px;font-size:10.4px;line-height:14px;letter-spacing:-0.005px;color:#111;">Y=81.47</span><span class="t" style="left:1091.60px;top:159.10px;font-size:10.4px;line-height:14px;letter-spacing:0.248px;color:#111;">Z=5.13</span><span class="t" style="left:984.90px;top:224.00px;font-size:10.4px;line-height:14px;letter-spacing:0.178px;color:#111;">X=63.93</span><span class="t" style="left:851.50px;top:178.10px;font-size:14.8px;line-height:19px;letter-spacing:0.000px;color:#111;">X</span><span class="t" style="left:1004.20px;top:178.00px;font-size:14.8px;line-height:19px;letter-spacing:0.000px;color:#111;">Y</span><span class="t" style="left:1003.30px;top:331.30px;font-size:14.8px;line-height:19px;letter-spacing:0.000px;color:#111;">Z</span><svg style="left:0;top:0" width="1280" height="360"><defs><linearGradient id="gyu" x1="0" y1="0" x2="0" y2="1"><stop offset="0" stop-color="#7ac5ea"/><stop offset="0.45" stop-color="#b5dcf0"/><stop offset="1" stop-color="#f1f6f9"/></linearGradient><linearGradient id="gyd" x1="0" y1="1" x2="0" y2="0"><stop offset="0" stop-color="#7ac5ea"/><stop offset="0.45" stop-color="#b5dcf0"/><stop offset="1" stop-color="#f1f6f9"/></linearGradient><linearGradient id="gzu" x1="0" y1="0" x2="0" y2="1"><stop offset="0" stop-color="#66caa6"/><stop offset="0.45" stop-color="#a4dcc6"/><stop offset="1" stop-color="#eef7f3"/></linearGradient><linearGradient id="gzd" x1="0" y1="1" x2="0" y2="0"><stop offset="0" stop-color="#66caa6"/><stop offset="0.45" stop-color="#a4dcc6"/><stop offset="1" stop-color="#eef7f3"/></linearGradient><linearGradient id="gxl" x1="0" y1="0" x2="1" y2="0"><stop offset="0" stop-color="#d19e6c"/><stop offset="0.45" stop-color="#e8cdb2"/><stop offset="1" stop-color="#f6f1ec"/></linearGradient><linearGradient id="gxr" x1="1" y1="0" x2="0" y2="0"><stop offset="0" stop-color="#d19e6c"/><stop offset="0.45" stop-color="#e8cdb2"/><stop offset="1" stop-color="#f6f1ec"/></linearGradient></defs><path d="M947.9 176.3 L970.2 193.1 H961.7 V240.8 H934.2 V193.1 H926.8 Z" fill="url(#gyu)" stroke="#3c3c3c" stroke-width="0.9" stroke-linejoin="miter"/><path d="M934.2 193.1 H961.7 M934.2 209.1 H961.7 M934.2 225.2 H961.7" stroke="rgba(60,60,60,0.38)" stroke-width="0.8"/><path d="M947.9 350.6 L970.2 334.6 H961.7 V286.4 H934.2 V334.6 H926.8 Z" fill="url(#gyd)" stroke="#3c3c3c" stroke-width="0.9" stroke-linejoin="miter"/><path d="M934.2 301.8 H961.7 M934.2 318.5 H961.7 M934.2 334.6 H961.7" stroke="rgba(60,60,60,0.38)" stroke-width="0.8"/><path d="M1114 176.3 L1136.3 193.1 H1128.3 V240.8 H1100.7 V193.1 H1092.7 Z" fill="url(#gzu)" stroke="#3c3c3c" stroke-width="0.9" stroke-linejoin="miter"/><path d="M1100.7 196.5 H1128.3 M1100.7 219.4 H1128.3" stroke="rgba(60,60,60,0.38)" stroke-width="0.8"/><path d="M1114 350.9 L1136.3 334.7 H1128.3 V286.4 H1100.7 V334.7 H1092.7 Z" fill="url(#gzd)" stroke="#3c3c3c" stroke-width="0.9" stroke-linejoin="miter"/><path d="M1100.7 307 H1128.3 M1100.7 329 H1128.3" stroke="rgba(60,60,60,0.38)" stroke-width="0.8"/><path d="M842 260.7 L859.2 241.7 V248.6 H912.4 V273.3 H859.2 V280.9 Z" fill="url(#gxl)" stroke="#3c3c3c" stroke-width="0.9" stroke-linejoin="miter"/><path d="M859.2 248.6 V273.3 M878 248.6 V273.3 M895.2 248.6 V273.3" stroke="rgba(60,60,60,0.38)" stroke-width="0.8"/><path d="M1050.7 260.7 L1033.1 241.7 V248.6 H979.6 V273.3 H1033.1 V280.9 Z" fill="url(#gxr)" stroke="#3c3c3c" stroke-width="0.9" stroke-linejoin="miter"/><path d="M1033.1 248.6 V273.3 M996.4 248.6 V273.3 M1014.7 248.6 V273.3" stroke="rgba(60,60,60,0.38)" stroke-width="0.8"/><g transform="translate(828.7,184.6)" fill="#6a6a6a"><path d="M9.8 0 L0 8.3 L1.3 9.8 L9.8 2.7 L18.3 9.8 L19.6 8.3 L16.2 5.4 V1 H13.6 V3.2 Z"/><path d="M9.8 4.2 L3 9.9 V16.5 H8 V11.6 H11.6 V16.5 H16.6 V9.9 Z"/></g><g transform="translate(1029.6,184.6)" fill="#6a6a6a"><path d="M9.8 0 L0 8.3 L1.3 9.8 L9.8 2.7 L18.3 9.8 L19.6 8.3 L16.2 5.4 V1 H13.6 V3.2 Z"/><path d="M9.8 4.2 L3 9.9 V16.5 H8 V11.6 H11.6 V16.5 H16.6 V9.9 Z"/></g><g transform="translate(828.7,325.4)" fill="#6a6a6a"><path d="M9.8 0 L0 8.3 L1.3 9.8 L9.8 2.7 L18.3 9.8 L19.6 8.3 L16.2 5.4 V1 H13.6 V3.2 Z"/><path d="M9.8 4.2 L3 9.9 V16.5 H8 V11.6 H11.6 V16.5 H16.6 V9.9 Z"/></g><g transform="translate(1028.6,326.6)" fill="#6a6a6a"><path d="M9.8 0 L0 8.3 L1.3 9.8 L9.8 2.7 L18.3 9.8 L19.6 8.3 L16.2 5.4 V1 H13.6 V3.2 Z"/><path d="M9.8 4.2 L3 9.9 V16.5 H8 V11.6 H11.6 V16.5 H16.6 V9.9 Z"/></g></svg><span class="t" style="left:939.40px;top:199.50px;font-size:13px;line-height:17px;letter-spacing:0.336px;color:#000;font-weight:bold;">+Y</span><span class="t" style="left:941.70px;top:309.30px;font-size:13px;line-height:17px;letter-spacing:-0.602px;color:#000;font-weight:bold;">-Y</span><span class="t" style="left:1106.50px;top:199.50px;font-size:13px;line-height:17px;letter-spacing:0.467px;color:#000;font-weight:bold;">+Z</span><span class="t" style="left:1107.90px;top:310.10px;font-size:13px;line-height:17px;letter-spacing:-0.171px;color:#000;font-weight:bold;">-Z</span><span class="t" style="left:870.60px;top:252.70px;font-size:13px;line-height:17px;letter-spacing:-0.602px;color:#000;font-weight:bold;">-X</span><span class="t" style="left:1006.20px;top:252.70px;font-size:13px;line-height:17px;letter-spacing:0.336px;color:#000;font-weight:bold;">+X</span><div class="b" style="left:803.4px;top:361.4px;width:89.5px;height:19.100000000000023px;background:#f1f1f1;border:1px solid #c2c6cc;box-shadow:inset 0 0 0 1px #fafafa;"></div><span class="t" style="left:828.70px;top:365.40px;font-size:9.2px;line-height:12px;letter-spacing:0.165px;color:#111;">Питание</span><svg style="left:806.9px;top:366.3px" width="10" height="10"><circle cx="5" cy="5" r="3.4" fill="#a6e6fd" stroke="#1b3f68" stroke-width="1.3"/></svg><div class="b" style="left:984.2px;top:361.6px;width:106.20000000000005px;height:18.599999999999966px;background:#f1f1f1;border:1px solid #c2c6cc;box-shadow:inset 0 0 0 1px #fafafa;"></div><span class="t" style="left:996.60px;top:365.20px;font-size:9.2px;line-height:12px;letter-spacing:0.137px;color:#111;">Остановить мотор</span><div class="b" style="left:1094.5px;top:361.6px;width:74.70000000000005px;height:18.599999999999966px;background:#f1f1f1;border:1px solid #c2c6cc;box-shadow:inset 0 0 0 1px #fafafa;"></div><span class="t" style="left:1107.90px;top:365.20px;font-size:9.2px;line-height:12px;letter-spacing:0.301px;color:#111;">Парковать</span><div class="b" style="left:803.5px;top:394px;width:393.0999999999999px;height:62px;border:1px solid #e1e1e1;border-radius:3px;box-shadow:inset 0 0 0 1px #fbfbfb;"></div><div class="b" style="left:808px;top:388px;width:95px;height:12px;background:#f0f0f0;"></div><span class="t" style="left:809.60px;top:388.20px;font-size:9.2px;line-height:12px;letter-spacing:0.152px;color:#111;">Множитель скорости</span><div class="b" style="left:803.5px;top:467px;width:212.79999999999995px;height:63px;border:1px solid #e1e1e1;border-radius:3px;box-shadow:inset 0 0 0 1px #fbfbfb;border-bottom:none;"></div><div class="b" style="left:807.5px;top:461px;width:51.0px;height:12px;background:#f0f0f0;"></div><span class="t" style="left:809.10px;top:461.20px;font-size:9.2px;line-height:12px;letter-spacing:0.355px;color:#111;">Экструдер</span><div class="b" style="left:1021.6px;top:467px;width:174.9999999999999px;height:63px;border:1px solid #e1e1e1;border-radius:3px;box-shadow:inset 0 0 0 1px #fbfbfb;border-bottom:none;"></div><div class="b" style="left:1026px;top:461px;width:36.5px;height:12px;background:#f0f0f0;"></div><span class="t" style="left:1027.90px;top:461.10px;font-size:9.2px;line-height:12px;letter-spacing:0.185px;color:#111;">Панель</span><span class="t" style="left:816.00px;top:408.70px;font-size:9.2px;line-height:12px;letter-spacing:0.179px;color:#111;">Интенсивность:</span><span class="t" style="left:816.00px;top:433.60px;font-size:9.2px;line-height:12px;letter-spacing:0.137px;color:#111;">Скорость подачи:</span><div class="b" style="left:904.4px;top:407.9px;width:70.39999999999998px;height:10.0px;background:linear-gradient(180deg,#dcdcdc 0,#c4c4c4 25%,#aeaeae 55%,#c6c6c6 85%,#dedede 100%);"></div><div class="b" style="left:974.8px;top:407.9px;width:170.0px;height:10.0px;background:linear-gradient(180deg,#c8c8c8 0,#8e8e8e 25%,#606060 55%,#929292 85%,#d0d0d0 100%);"></div><div class="b" style="left:966px;top:401.3px;width:9.799999999999955px;height:23.19999999999999px;background:linear-gradient(90deg,#f4f4f4,#e4e4e4);border:1px solid #c2c2c2;border-radius:3px;box-shadow:0 0 1.5px rgba(0,0,0,.18);"></div><div class="b" style="left:904.4px;top:434.6px;width:123.39999999999998px;height:9.599999999999966px;background:linear-gradient(180deg,#dcdcdc 0,#c4c4c4 25%,#aeaeae 55%,#c6c6c6 85%,#dedede 100%);"></div><div class="b" style="left:1027.8px;top:434.6px;width:117.0px;height:9.599999999999966px;background:linear-gradient(180deg,#c8c8c8 0,#8e8e8e 25%,#606060 55%,#929292 85%,#d0d0d0 100%);"></div><div class="b" style="left:1019.1px;top:427.3px;width:9.699999999999932px;height:23.5px;background:linear-gradient(90deg,#f4f4f4,#e4e4e4);border:1px solid #c2c2c2;border-radius:3px;box-shadow:0 0 1.5px rgba(0,0,0,.18);"></div><div class="b" style="left:1150.4px;top:404.2px;width:40.59999999999991px;height:14.0px;background:#fff;border:1px solid #cfcfd8;"></div><div class="b" style="left:1180.6px;top:405.0px;width:9.600000000000136px;height:6.199999999999989px;background:#ececee;border:1px solid #d6d6dc;"></div><div class="b" style="left:1180.6px;top:411.2px;width:9.600000000000136px;height:6.199999999999989px;background:#e4e4e8;border:1px solid #d6d6dc;"></div><svg style="left:1180.6px;top:404.2px" width="9.6" height="14.0"><path d="M2.6 5.1 L4.8 2.7 L7 5.1 Z M2.6 9.1 L4.8 11.5 L7 9.1 Z" fill="#56679c"/></svg><span class="t" style="left:1152.50px;top:405.00px;font-size:9.6px;line-height:12px;letter-spacing:-1.057px;color:#111;">100</span><div class="b" style="left:1150.4px;top:430px;width:40.59999999999991px;height:14.199999999999989px;background:#fff;border:1px solid #cfcfd8;"></div><div class="b" style="left:1180.6px;top:430.8px;width:9.600000000000136px;height:6.300000000000011px;background:#ececee;border:1px solid #d6d6dc;"></div><div class="b" style="left:1180.6px;top:437.1px;width:9.600000000000136px;height:6.2999999999999545px;background:#e4e4e8;border:1px solid #d6d6dc;"></div><svg style="left:1180.6px;top:430px" width="9.6" height="14.199999999999989"><path d="M2.6 5.200000000000022 L4.8 2.800000000000023 L7 5.200000000000022 Z M2.6 9.200000000000022 L4.8 11.600000000000023 L7 9.200000000000022 Z" fill="#56679c"/></svg><span class="t" style="left:1152.50px;top:430.60px;font-size:9.6px;line-height:12px;letter-spacing:-1.057px;color:#111;">100</span><div class="b" style="left:810px;top:478.4px;width:177.29999999999995px;height:17.30000000000001px;background:linear-gradient(#f4f4f4 0,#ececec 48%,#dedede 52%,#d2d2d2 100%);border:1px solid #8a8a8a;border-radius:2.5px;box-shadow:inset 0 0 0 1px rgba(255,255,255,.7);"></div><span class="t" style="left:856.00px;top:481.30px;font-size:9.2px;line-height:12px;letter-spacing:0.266px;color:#111;">Нагреть экструдер</span><svg style="left:810.7px;top:482.3px" width="10" height="10"><circle cx="5" cy="5" r="3.4" fill="#a6e6fd" stroke="#1b3f68" stroke-width="1.3"/></svg><div class="b" style="left:1027.9px;top:476.9px;width:158.89999999999986px;height:17.600000000000023px;background:linear-gradient(#f4f4f4 0,#ececec 48%,#dedede 52%,#d2d2d2 100%);border:1px solid #3f96cf;border-radius:2.5px;box-shadow:inset 0 0 0 1.2px #86d6f4;"></div><span class="t" style="left:1071.80px;top:479.70px;font-size:9.2px;line-height:12px;letter-spacing:0.204px;color:#111;">Нагреть панель</span><svg style="left:1029.3px;top:480.4px" width="10" height="10"><defs><radialGradient id="ld" cx="0.4" cy="0.35" r="0.7"><stop offset="0" stop-color="#5a78c8"/><stop offset="0.6" stop-color="#1c2f7a"/><stop offset="1" stop-color="#0a1440"/></radialGradient></defs><circle cx="5" cy="5" r="3.9" fill="url(#ld)" stroke="#0c1438" stroke-width="0.9"/></svg><div class="b" style="left:814.4px;top:501.5px;width:78.20000000000005px;height:15.5px;background:linear-gradient(#f4f4f4 0,#ececec 48%,#dedede 52%,#d2d2d2 100%);border:1px solid #8a8a8a;border-radius:2.5px;"></div><span class="t" style="left:817.20px;top:503.60px;font-size:9.2px;line-height:12px;letter-spacing:0.107px;color:#111;">Экструдер 1</span><svg style="left:880px;top:505px" width="10" height="10"><path d="M2.2 3.2 h5.6 l-2.8 3.4 z" fill="#111"/></svg><span class="t" style="left:901.00px;top:503.70px;font-size:9.2px;line-height:12px;letter-spacing:-0.574px;color:#111;">227.80°C /</span><div class="b" style="left:958.2px;top:502.6px;width:47.0px;height:14.0px;background:#fff;border:1px solid #cfcfd8;"></div><div class="b" style="left:994.8000000000001px;top:503.40000000000003px;width:9.600000000000023px;height:6.199999999999989px;background:#ececee;border:1px solid #d6d6dc;"></div><div class="b" style="left:994.8000000000001px;top:509.6px;width:9.600000000000023px;height:6.2000000000000455px;background:#e4e4e8;border:1px solid #d6d6dc;"></div><svg style="left:994.8000000000001px;top:502.6px" width="9.6" height="14.0"><path d="M2.6 5.1 L4.8 2.7 L7 5.1 Z M2.6 9.1 L4.8 11.5 L7 9.1 Z" fill="#56679c"/></svg><span class="t" style="left:959.80px;top:503.60px;font-size:9.6px;line-height:12px;letter-spacing:-1.307px;color:#111;">230</span><span class="t" style="left:1030.00px;top:503.30px;font-size:9.2px;line-height:12px;letter-spacing:-0.037px;color:#111;">Temp.</span><span class="t" style="left:1067.40px;top:503.30px;font-size:9.2px;line-height:12px;letter-spacing:-0.507px;color:#111;">28.70°C /</span><div class="b" style="left:1122.8px;top:501.2px;width:48.600000000000136px;height:14.300000000000011px;background:#fff;border:1px solid #cfcfd8;"></div><div class="b" style="left:1161.0px;top:502.0px;width:9.600000000000136px;height:6.350000000000023px;background:#ececee;border:1px solid #d6d6dc;"></div><div class="b" style="left:1161.0px;top:508.35px;width:9.600000000000136px;height:6.350000000000023px;background:#e4e4e8;border:1px solid #d6d6dc;"></div><svg style="left:1161.0px;top:501.2px" width="9.6" height="14.300000000000011"><path d="M2.6 5.250000000000034 L4.8 2.8500000000000343 L7 5.250000000000034 Z M2.6 9.250000000000034 L4.8 11.650000000000034 L7 9.250000000000034 Z" fill="#56679c"/></svg><span class="t" style="left:1124.80px;top:502.00px;font-size:9.6px;line-height:12px;letter-spacing:-1.476px;color:#111;">20</span><div class="b" style="left:1264px;top:93.2px;width:14.400000000000091px;height:431.8px;background:#f5f5f5;"></div><div class="b" style="left:1264.3px;top:108.2px;width:12.900000000000091px;height:309.2px;background:linear-gradient(90deg,#f4f4f4,#e0e0e2 55%,#c8c8cc);border:1px solid #b2b2b2;border-radius:1.5px;"></div><svg style="left:1264px;top:93px" width="16" height="432"><path d="M3.9 9 h5.4 l-2.7 -3.2 z M3.9 421.6 h5.4 l-2.7 3.2 z" fill="#333"/><path d="M4 168 h5.6 M4 170.4 h5.6 M4 172.8 h5.6" stroke="#888" stroke-width="0.9"/></svg>
<div class="b" style="left:0px;top:525.3px;width:1280px;height:4.7000000000000455px;background:#fff;"></div><div class="b" style="left:0px;top:525.4px;width:1280px;height:1.6000000000000227px;background:#a9a9a9;"></div><div class="b" style="left:0px;top:529.8px;width:1280px;height:21.800000000000068px;background:#f0f0f0;border-top:1px solid #b8b8b8;border-left:1px solid #b0b0b0;"></div><span class="t" style="left:5.70px;top:534.80px;font-size:9.4px;line-height:12px;letter-spacing:-0.043px;color:#111;">Показывать в журнале:</span><svg style="left:118.3px;top:535.8px" width="10" height="10"><circle cx="5" cy="5" r="3.7" fill="#3a4a9c" stroke="#0b1030" stroke-width="1.2"/><circle cx="4.6" cy="4.4" r="1.9" fill="#5c6ebc"/></svg><span class="t" style="left:129.00px;top:534.60px;font-size:9.4px;line-height:12px;letter-spacing:-0.303px;color:#111;">Команды</span><svg style="left:183.9px;top:535.8px" width="10" height="10"><circle cx="5" cy="5" r="3.4" fill="#a6e6fd" stroke="#1b3f68" stroke-width="1.3"/></svg><span class="t" style="left:195.00px;top:534.60px;font-size:9.4px;line-height:12px;letter-spacing:-0.301px;color:#111;">Инфо</span><svg style="left:236.1px;top:535.8px" width="10" height="10"><circle cx="5" cy="5" r="3.4" fill="#a6e6fd" stroke="#1b3f68" stroke-width="1.3"/></svg><span class="t" style="left:246.80px;top:534.60px;font-size:9.4px;line-height:12px;letter-spacing:0.096px;color:#111;">Предупраждения</span><svg style="left:340.5px;top:535.8px" width="10" height="10"><circle cx="5" cy="5" r="3.4" fill="#a6e6fd" stroke="#1b3f68" stroke-width="1.3"/></svg><span class="t" style="left:351.00px;top:534.60px;font-size:9.4px;line-height:12px;letter-spacing:-0.509px;color:#111;">Ошибки</span><svg style="left:400.6px;top:535.8px" width="10" height="10"><circle cx="5" cy="5" r="3.7" fill="#3a4a9c" stroke="#0b1030" stroke-width="1.2"/><circle cx="4.6" cy="4.4" r="1.9" fill="#5c6ebc"/></svg><span class="t" style="left:411.00px;top:534.60px;font-size:9.4px;line-height:12px;letter-spacing:0.069px;color:#111;">Подтверждение</span><svg style="left:498.2px;top:535.8px" width="10" height="10"><circle cx="5" cy="5" r="3.4" fill="#a6e6fd" stroke="#1b3f68" stroke-width="1.3"/></svg><span class="t" style="left:508.80px;top:534.60px;font-size:9.4px;line-height:12px;letter-spacing:0.308px;color:#111;">Автопрокрутка</span><svg style="left:596px;top:536px" width="9" height="10"><path d="M1.4 3 h5.2 l-0.45 5.8 h-4.3 z" fill="#858585"/><rect x="0.9" y="1.9" width="6.2" height="1" fill="#777"/><rect x="2.8" y="1.1" width="2.4" height="1" fill="#777"/></svg><span class="t" style="left:606.90px;top:534.80px;font-size:9.4px;line-height:12px;letter-spacing:-0.003px;color:#111;">Очистить журнал</span><svg style="left:699px;top:537px" width="9" height="9"><rect x="0.8" y="0.9" width="4.4" height="5.2" fill="#f4f4f4" stroke="#777" stroke-width="0.9"/><rect x="3" y="2.6" width="4.4" height="5.2" fill="#f4f4f4" stroke="#777" stroke-width="0.9"/></svg><span class="t" style="left:710.00px;top:534.80px;font-size:9.4px;line-height:12px;letter-spacing:0.211px;color:#111;">Копировать</span><div class="b" style="left:0px;top:551.6px;width:1268.6px;height:128.39999999999998px;background:#f4f0ee;"></div><div class="b" style="left:68.7px;top:552.0px;width:1199.8999999999999px;height:10.659999999999968px;background:#fdf0e6;"></div><div class="b" style="left:68.7px;top:562.66px;width:1199.8999999999999px;height:10.660000000000082px;background:#ffffff;"></div><div class="b" style="left:68.7px;top:573.32px;width:1199.8999999999999px;height:10.659999999999968px;background:#fdf0e6;"></div><div class="b" style="left:68.7px;top:583.98px;width:1199.8999999999999px;height:10.659999999999968px;background:#ffffff;"></div><div class="b" style="left:68.7px;top:594.64px;width:1199.8999999999999px;height:10.659999999999968px;background:#fdf0e6;"></div><div class="b" style="left:68.7px;top:605.3px;width:1199.8999999999999px;height:10.660000000000082px;background:#ffffff;"></div><div class="b" style="left:68.7px;top:615.96px;width:1199.8999999999999px;height:10.659999999999968px;background:#fdf0e6;"></div><div class="b" style="left:68.7px;top:626.62px;width:1199.8999999999999px;height:10.659999999999968px;background:#ffffff;"></div><div class="b" style="left:68.7px;top:637.28px;width:1199.8999999999999px;height:10.660000000000082px;background:#fdf0e6;"></div><div class="b" style="left:68.7px;top:647.94px;width:1199.8999999999999px;height:10.659999999999968px;background:#ffffff;"></div><div class="b" style="left:68.7px;top:658.6px;width:1199.8999999999999px;height:10.659999999999968px;background:#fdf0e6;"></div><div class="b" style="left:0px;top:551.6px;width:68.7px;height:128.39999999999998px;background:#5f9ea0;"></div><span class="t" style="left:4.30px;top:552.73px;font-size:8.4px;line-height:11px;letter-spacing:-0.106px;color:#e6f4f4;font-family:'Liberation Mono',monospace;">10:53:33.268</span><span class="t" style="left:72.90px;top:552.73px;font-size:8.4px;line-height:11px;letter-spacing:-0.120px;color:#3b2f98;font-family:'Liberation Mono',monospace;">Печать слоя 10 из 48</span><span class="t" style="left:4.30px;top:563.39px;font-size:8.4px;line-height:11px;letter-spacing:-0.106px;color:#e6f4f4;font-family:'Liberation Mono',monospace;">10:54:26.398</span><span class="t" style="left:72.90px;top:563.39px;font-size:8.4px;line-height:11px;letter-spacing:-0.120px;color:#3b2f98;font-family:'Liberation Mono',monospace;">Печать слоя 11 из 48</span><span class="t" style="left:4.30px;top:574.05px;font-size:8.4px;line-height:11px;letter-spacing:-0.106px;color:#e6f4f4;font-family:'Liberation Mono',monospace;">10:55:20.327</span><span class="t" style="left:72.90px;top:574.05px;font-size:8.4px;line-height:11px;letter-spacing:-0.120px;color:#3b2f98;font-family:'Liberation Mono',monospace;">Печать слоя 12 из 48</span><span class="t" style="left:4.30px;top:584.71px;font-size:8.4px;line-height:11px;letter-spacing:-0.106px;color:#e6f4f4;font-family:'Liberation Mono',monospace;">10:56:14.737</span><span class="t" style="left:72.90px;top:584.71px;font-size:8.4px;line-height:11px;letter-spacing:-0.120px;color:#3b2f98;font-family:'Liberation Mono',monospace;">Печать слоя 13 из 48</span><span class="t" style="left:4.30px;top:595.37px;font-size:8.4px;line-height:11px;letter-spacing:-0.106px;color:#e6f4f4;font-family:'Liberation Mono',monospace;">10:57:07.867</span><span class="t" style="left:72.90px;top:595.37px;font-size:8.4px;line-height:11px;letter-spacing:-0.120px;color:#3b2f98;font-family:'Liberation Mono',monospace;">Печать слоя 14 из 48</span><span class="t" style="left:4.30px;top:606.03px;font-size:8.4px;line-height:11px;letter-spacing:-0.106px;color:#e6f4f4;font-family:'Liberation Mono',monospace;">10:58:01.800</span><span class="t" style="left:72.90px;top:606.03px;font-size:8.4px;line-height:11px;letter-spacing:-0.120px;color:#3b2f98;font-family:'Liberation Mono',monospace;">Печать слоя 15 из 48</span><span class="t" style="left:4.30px;top:616.69px;font-size:8.4px;line-height:11px;letter-spacing:-0.106px;color:#e6f4f4;font-family:'Liberation Mono',monospace;">10:58:56.208</span><span class="t" style="left:72.90px;top:616.69px;font-size:8.4px;line-height:11px;letter-spacing:-0.120px;color:#3b2f98;font-family:'Liberation Mono',monospace;">Печать слоя 16 из 48</span><span class="t" style="left:4.30px;top:627.35px;font-size:8.4px;line-height:11px;letter-spacing:-0.106px;color:#e6f4f4;font-family:'Liberation Mono',monospace;">10:59:49.338</span><span class="t" style="left:72.90px;top:627.35px;font-size:8.4px;line-height:11px;letter-spacing:-0.120px;color:#3b2f98;font-family:'Liberation Mono',monospace;">Печать слоя 17 из 48</span><span class="t" style="left:4.30px;top:638.01px;font-size:8.4px;line-height:11px;letter-spacing:-0.106px;color:#e6f4f4;font-family:'Liberation Mono',monospace;">11:00:43.267</span><span class="t" style="left:72.90px;top:638.01px;font-size:8.4px;line-height:11px;letter-spacing:-0.120px;color:#3b2f98;font-family:'Liberation Mono',monospace;">Печать слоя 18 из 48</span><span class="t" style="left:4.30px;top:648.67px;font-size:8.4px;line-height:11px;letter-spacing:-0.106px;color:#e6f4f4;font-family:'Liberation Mono',monospace;">11:01:37.740</span><span class="t" style="left:72.90px;top:648.67px;font-size:8.4px;line-height:11px;letter-spacing:-0.120px;color:#3b2f98;font-family:'Liberation Mono',monospace;">Печать слоя 19 из 48</span><span class="t" style="left:4.30px;top:659.33px;font-size:8.4px;line-height:11px;letter-spacing:-0.106px;color:#e6f4f4;font-family:'Liberation Mono',monospace;">11:03:35.205</span><span class="t" style="left:72.90px;top:659.33px;font-size:8.4px;line-height:11px;letter-spacing:-0.120px;color:#3b2f98;font-family:'Liberation Mono',monospace;">Печать слоя 20 из 48</span><div class="b" style="left:1268.6px;top:551.6px;width:11.400000000000091px;height:128.39999999999998px;background:#f0f0f0;"></div><div class="b" style="left:1269.2px;top:650.8px;width:10.200000000000045px;height:13.800000000000068px;background:linear-gradient(90deg,#f6f6f6,#dcdcdc);border:1px solid #9a9a9a;border-radius:2px;"></div><svg style="left:1268px;top:551px" width="12" height="130"><path d="M3.6 9.4 h5.6 l-2.8 -3.2 z M3.6 120 h5.6 l-2.8 3.2 z" fill="#444"/><path d="M4 104.5 h5 M4 106.7 h5 M4 108.9 h5" stroke="#777" stroke-width="0.9"/></svg><div class="b" style="left:0px;top:679.6px;width:1280px;height:1.1999999999999318px;background:#7e7e7e;"></div>
<div class="b" style="left:0px;top:680.8px;width:1280px;height:17.200000000000045px;background:#f0f0f0;"></div><span class="t" style="left:4.00px;top:682.90px;font-size:10px;line-height:13px;letter-spacing:0.080px;color:#111;">Подключено:default</span><span class="t" style="left:103.00px;top:682.90px;font-size:10px;line-height:13px;letter-spacing:-0.240px;color:#111;">Экструдер: 227.80/230°C Панель: 28.70°C/Откл.</span><span class="t" style="left:327.00px;top:682.90px;font-size:10px;line-height:13px;letter-spacing:-0.217px;color:#111;">Печать...ETA 7м:55с Слой 20/48</span><div class="b" style="left:473px;top:684px;width:178.39999999999998px;height:11.399999999999977px;background:linear-gradient(#e8e8e8,#d0d0d0 50%,#c6c6c6);border:1px solid #a8a8a8;border-radius:2px;"></div><div class="b" style="left:474px;top:685px;width:143px;height:9.399999999999977px;background:linear-gradient(180deg,rgba(255,255,255,.55) 0,rgba(255,255,255,.15) 45%,rgba(0,0,0,.08) 55%,rgba(255,255,255,.12) 100%),linear-gradient(90deg,#12b52a 0,#1ec83a 25%,#7af08c 48%,#1ec83a 70%,#12b52a 100%);border-radius:1px;"></div><span class="t" style="left:655.00px;top:682.90px;font-size:10px;line-height:13px;letter-spacing:-0.769px;color:#111;">832 FPS</span><svg style="left:8px;top:691px" width="30" height="8"><circle cx="14" cy="15.2" r="12.2" fill="#8fa3bb" stroke="#3f4c5c" stroke-width="1.3"/><circle cx="14" cy="16" r="9.5" fill="#a9bdd4"/></svg>
</body></html>
